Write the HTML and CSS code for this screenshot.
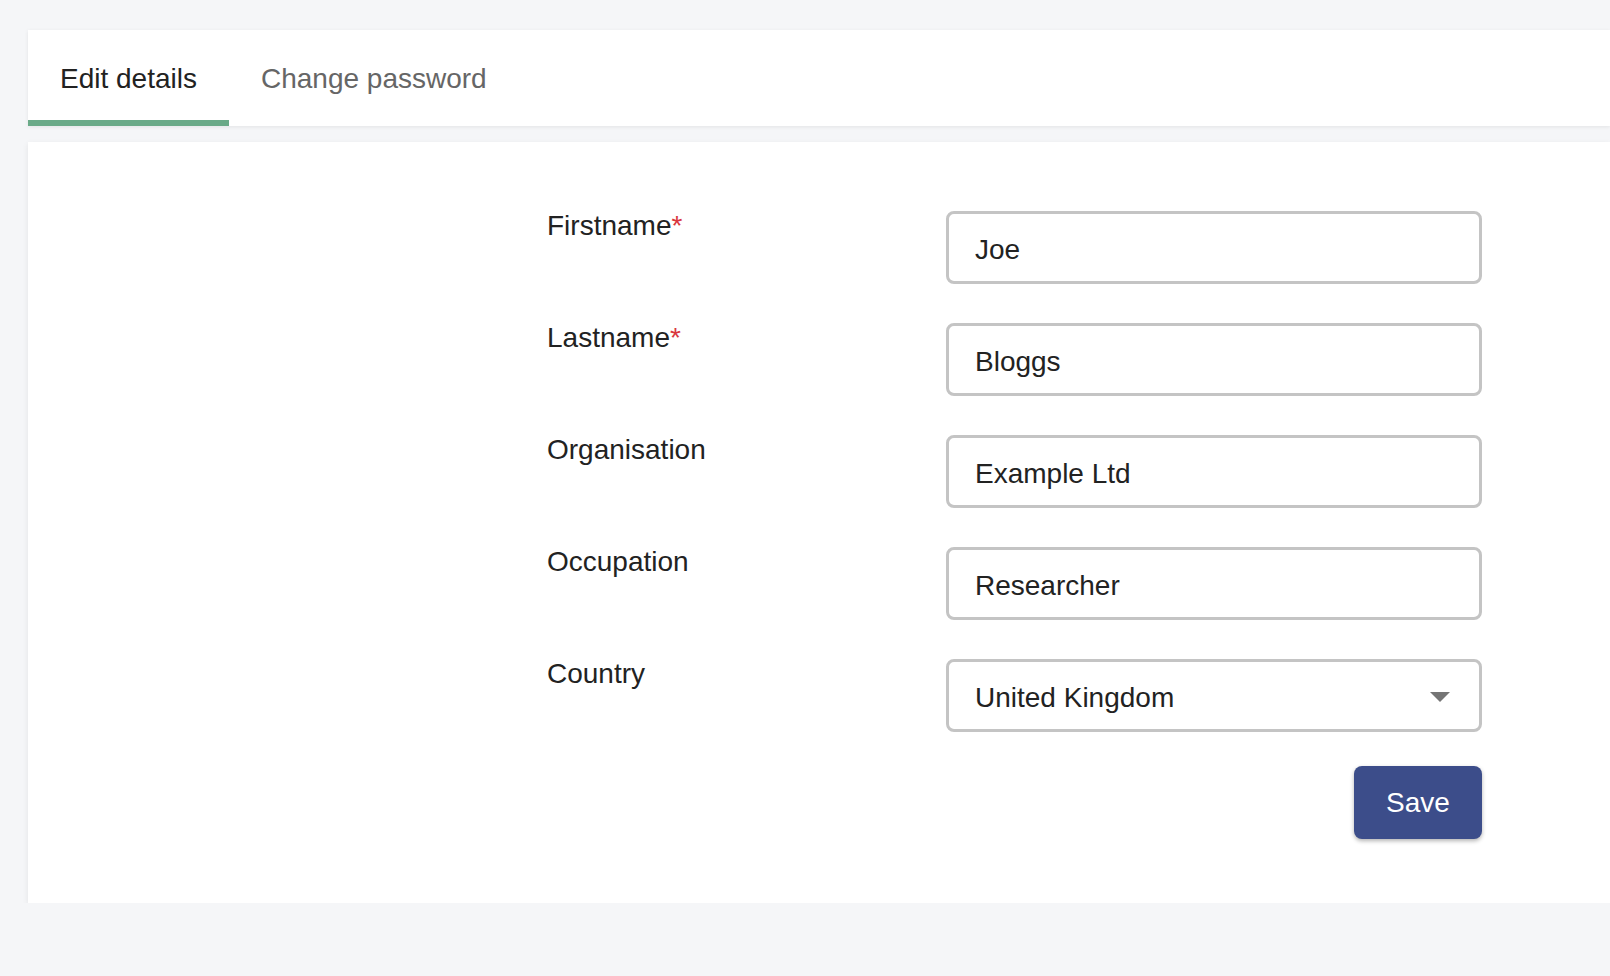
FILE: index.html
```html
<!DOCTYPE html>
<html lang="en">
<head>
    <meta charset="UTF-8">
    <meta name="viewport" content="width=device-width, initial-scale=1.0">
    <title>Account</title>
    <link rel="stylesheet" href="styles.css">
</head>
<body>
<div class="page">
    <div class="tabs">
        <div class="tab active">Edit details</div>
        <div class="tab">Change password</div>
    </div>

    <div class="card">
        <form class="form">
            <label class="label" for="firstname">Firstname<span class="req">*</span></label>
            <input class="field" type="text" id="firstname" value="Joe">

            <label class="label" for="lastname">Lastname<span class="req">*</span></label>
            <input class="field" type="text" id="lastname" value="Bloggs">

            <label class="label" for="organisation">Organisation</label>
            <input class="field" type="text" id="organisation" value="Example Ltd">

            <label class="label" for="occupation">Occupation</label>
            <input class="field" type="text" id="occupation" value="Researcher">

            <label class="label" for="country">Country</label>
            <div class="select-wrap">
                <select class="field" id="country">
                    <option>United Kingdom</option>
                    <option>Ireland</option>
                    <option>France</option>
                </select>
                <svg class="caret" width="20" height="10" viewBox="0 0 20 10"><path d="M0 0 L20 0 L10 10 Z" fill="#757575"/></svg>
            </div>

            <div class="actions">
                <button type="button" class="save">Save</button>
            </div>
        </form>
    </div>
</div>
</body>
</html>
```

FILE: styles.css
```css
body {
    margin: 0;
    font-family: "Liberation Sans", Arial, sans-serif;
    background-color: #f5f6f8;
    color: #222;
}

.page {
    padding: 30px 0 0 28px;
}

.tabs {
    display: flex;
    height: 96px;
    background-color: white;
    box-shadow: 0 1px 4px rgba(0,0,0,0.08);
}

.tab {
    padding: 0 32px;
    font-size: 28px;
    line-height: 98px;
    color: #666;
    border-bottom: 6px solid transparent;
    box-sizing: border-box;
    height: 96px;
    cursor: pointer;
}

.tab.active {
    color: #222;
    border-bottom-color: #6aaa88;
}

.card {
    margin-top: 16px;
    background-color: white;
    padding: 69px 0 64px 519px;
    box-shadow: 0 2px 6px rgba(0,0,0,0.08);
}

.form {
    display: grid;
    grid-template-columns: 399px 536px;
    row-gap: 39px;
}

.label {
    font-size: 28px;
    line-height: 30px;
    color: #222;
}

.req {
    color: #d9363e;
}

.field {
    width: 100%;
    height: 73px;
    box-sizing: border-box;
    border: 3px solid #c4c4c4;
    border-radius: 8px;
    padding: 4px 26px 0;
    font-family: "Liberation Sans", Arial, sans-serif;
    font-size: 28px;
    color: #222;
    background-color: white;
    outline: none;
}

.select-wrap {
    position: relative;
}

select.field {
    appearance: none;
    -webkit-appearance: none;
}

.caret {
    position: absolute;
    right: 32px;
    top: 33px;
    pointer-events: none;
}

.actions {
    grid-column: 2;
    display: flex;
    justify-content: flex-end;
    margin-top: -5px;
}

.save {
    width: 128px;
    height: 73px;
    background-color: #3c4d8a;
    color: white;
    border: none;
    border-radius: 8px;
    font-family: "Liberation Sans", Arial, sans-serif;
    font-size: 28px;
    cursor: pointer;
    box-shadow: 0 2px 4px rgba(0,0,0,0.3);
}
```
